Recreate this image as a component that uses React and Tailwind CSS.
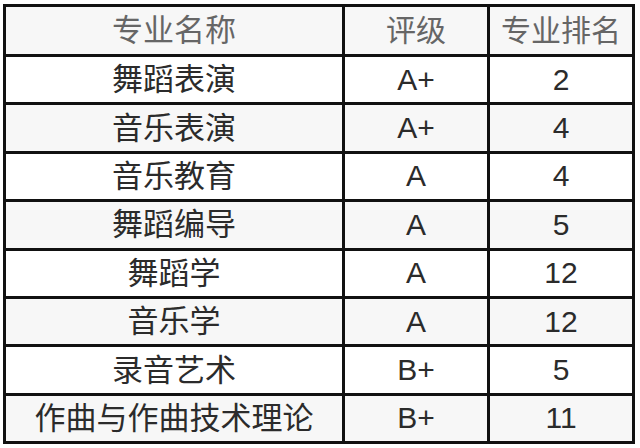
const rows = [
  ['舞蹈表演', 'A+', '2'],
  ['音乐表演', 'A+', '4'],
  ['音乐教育', 'A', '4'],
  ['舞蹈编导', 'A', '5'],
  ['舞蹈学', 'A', '12'],
  ['音乐学', 'A', '12'],
  ['录音艺术', 'B+', '5'],
  ['作曲与作曲技术理论', 'B+', '11'],
]

const font = { fontFamily: '"Liberation Sans", "Noto Sans CJK SC", sans-serif' }

function Row({ cells, header, gray, last }) {
  return (
    <div
      className={`grid grid-cols-[336px_145px_145px] ${header ? 'h-[50px]' : last ? 'h-[45.4px]' : 'h-[48.4px]'} ${gray ? 'bg-[#f7f7f7]' : 'bg-white'} ${last ? '' : 'border-b-[3px] border-[#111]'} ${header ? 'text-[#666]' : 'text-[#2b2b2b]'}`}
    >
      {cells.map((c, i) => (
        <div
          key={i}
          className={`flex items-center justify-center leading-none ${i === 0 ? 'text-[31px]' : 'text-[30px]'} ${i > 0 ? 'border-l-[3px] border-[#111]' : ''}`}
        >
          {c}
        </div>
      ))}
    </div>
  )
}

export default function App() {
  return (
    <div className="w-[640px] h-[448px] bg-white pt-[4px] pl-[3px]" style={font}>
      <div className="w-[632px] border-[3px] border-[#111] flex flex-col">
        <Row cells={['专业名称', '评级', '专业排名']} header gray />
        {rows.map((r, i) => (
          <Row key={i} cells={r} gray={i % 2 === 1} last={i === rows.length - 1} />
        ))}
      </div>
    </div>
  )
}
